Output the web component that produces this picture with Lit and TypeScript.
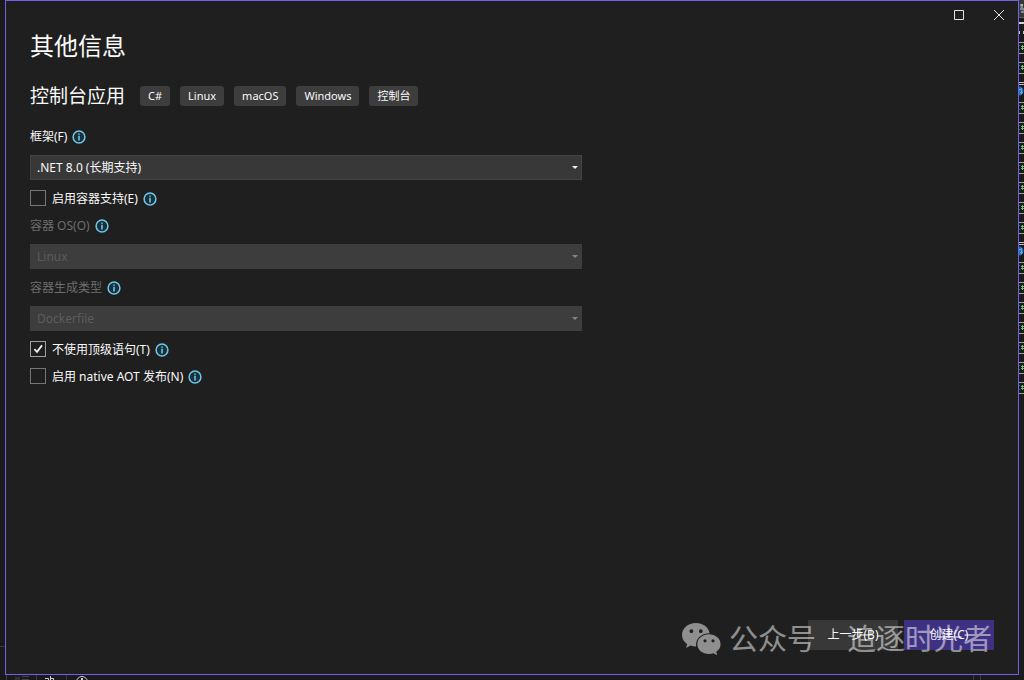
import { LitElement, html, css, svg } from "lit";
import { customElement, property } from "lit/decorators.js";

const infoIcon = html`
  <svg class="info" viewBox="0 0 14 14" role="img" aria-label="信息">
    <circle cx="7" cy="7" r="5.9" fill="#1c3038" stroke="#6cc8ec" stroke-width="1.5" />
    <path d="M6.2 3.4h1.6v1.4H6.2zM6.2 5.8h1.6v4.8H6.2z" fill="#6cc8ec" />
  </svg>
`;

const shared = css`
  * {
    box-sizing: border-box;
  }
  .info {
    width: 14px;
    height: 14px;
    flex: none;
    display: block;
  }
`;

@customElement("select-field")
class SelectField extends LitElement {
  @property() label = "";
  @property() value = "";
  @property({ type: Boolean }) disabled = false;

  static styles = [
    shared,
    css`
      :host {
        display: block;
        padding-bottom: 1px;
      }
      .caption {
        display: flex;
        align-items: center;
        gap: 5px;
        height: 18px;
        margin-bottom: 9px;
      }
      .box {
        display: grid;
        align-items: center;
      }
      .select {
        grid-area: 1 / 1;
        appearance: none;
        width: 100%;
        height: 25px;
        padding: 0 24px 0 6px;
        border: 1px solid #434343;
        border-radius: 0;
        background: #383838;
        color: #fafafa;
        font: inherit;
        opacity: 1;
      }
      .arrow {
        grid-area: 1 / 1;
        justify-self: end;
        width: 6px;
        height: 3px;
        margin-right: 4px;
        fill: #f0f0f0;
        pointer-events: none;
      }
      .off .label {
        color: #6d6d6d;
      }
      .off .select {
        background: #3d3d3d;
        border-color: #3d3d3d;
        color: #5c5c5c;
      }
      .off .arrow {
        fill: #858585;
      }
    `,
  ];

  render() {
    return html`
      <div class=${this.disabled ? "off" : "on"}>
        <div class="caption">
          <label class="label" for="field">${this.label}</label>${infoIcon}
        </div>
        <div class="box">
          <select class="select" id="field" ?disabled=${this.disabled}>
            <option>${this.value}</option>
          </select>
          <svg class="arrow" viewBox="0 0 6 3"><path d="M0 0h6L3 3z" /></svg>
        </div>
      </div>
    `;
  }
}

@customElement("check-field")
class CheckField extends LitElement {
  @property() label = "";
  @property({ type: Boolean }) checked = false;

  static styles = [
    shared,
    css`
      :host {
        display: flex;
        align-items: center;
        gap: 5px;
        height: 18px;
      }
      .label {
        display: flex;
        align-items: flex-start;
        gap: 6px;
      }
      .mark {
        display: grid;
      }
      .tick {
        grid-area: 1 / 1;
        appearance: none;
        width: 16px;
        height: 16px;
        margin: 0;
        border: 1px solid #767676;
        background: #1f1f1f;
      }
      .tick:checked {
        border-color: #a0a0a0;
      }
      .glyph {
        grid-area: 1 / 1;
        width: 16px;
        height: 16px;
        fill: none;
        stroke: #f0f0f0;
        stroke-width: 1.8;
        pointer-events: none;
      }
      .tick:not(:checked) + .glyph {
        display: none;
      }
    `,
  ];

  render() {
    return html`
      <label class="label">
        <span class="mark">
          <input class="tick" type="checkbox" .checked=${this.checked} />
          <svg class="glyph" viewBox="0 0 16 16"><path d="M4.400 8.200l2.600 2.600L12 4.400" /></svg>
        </span>
        ${this.label}
      </label>
      ${infoIcon}
    `;
  }
}

/* Kinds of nodes in the solution tree that shows beside the dialog. */
const treeRows = [
  "file", "file", "web", "file", "file", "file", "file", "file", "file", "file",
  "web", "file", "file", "file", "file", "file", "file", "file",
];

@customElement("app-root")
class AppRoot extends LitElement {
  static styles = [
    shared,
    css`
      :host {
        display: grid;
        grid-template-columns: 5px minmax(0, 1fr) 5px;
        grid-template-rows: minmax(0, 1fr) 5px;
        height: 100vh;
        overflow: hidden;
        background: #1a1a1a;
        color: #fafafa;
        font: 12px/18px "Noto Sans", "Noto Sans CJK SC", sans-serif;
      }
      .gutter {
        display: flex;
        flex-direction: column;
        justify-content: flex-end;
        padding-bottom: 28px;
      }
      .rule {
        height: 1px;
        background: #3d3d3d;
      }
      .dialog {
        display: flex;
        flex-direction: column;
        border: 1px solid #7160e8;
        background: #1f1f1f;
      }
      .titlebar {
        display: flex;
        justify-content: flex-end;
        height: 28px;
      }
      .winbtn {
        display: grid;
        place-items: center;
        width: 40px;
        height: 28px;
        padding: 0;
        border: 0;
        background: none;
      }
      .winicon {
        width: 12px;
        height: 12px;
        fill: none;
        stroke: #e6e6e6;
      }
      .content {
        flex: 1;
        padding: 0 24px;
      }
      .title {
        margin: 0;
        font-size: 24px;
        line-height: 34px;
        font-weight: 400;
      }
      .project {
        display: flex;
        align-items: center;
        gap: 15px;
        height: 28px;
        margin: 19px 0 18px;
      }
      .name {
        margin: 0;
        font-size: 19px;
        line-height: 28px;
        font-weight: 400;
      }
      .tags {
        display: flex;
        gap: 10px;
        margin: 0;
        padding: 0;
        list-style: none;
      }
      .tag {
        height: 20px;
        padding: 0 8px;
        border-radius: 3px;
        background: #3d3d3d;
        font-size: 11px;
        line-height: 20px;
      }
      .form {
        display: flex;
        flex-direction: column;
        gap: 9px;
        width: 100%;
        max-width: 552px;
      }
      .footer {
        display: grid;
        justify-items: end;
        align-items: start;
        padding: 0 24px 16px;
      }
      .actions {
        grid-area: 1 / 1;
        display: flex;
        gap: 6px;
      }
      .action {
        width: 90px;
        height: 30px;
        padding: 0;
        border: 0;
        background: #383838;
        color: #fafafa;
        font: inherit;
      }
      .primary {
        background: #3f3182;
      }
      .watermark {
        grid-area: 1 / 1;
        display: flex;
        align-items: center;
        gap: 8px;
        padding-right: 2px;
        color: #ffffff;
        opacity: 0.5;
        font-size: 29px;
        line-height: 38px;
        white-space: pre;
        pointer-events: none;
        z-index: 1;
      }
      .account {
        display: flex;
        gap: 31px;
      }
      .bubbles {
        width: 39px;
        height: 32px;
      }
      .leaf {
        display: block;
        width: 5px;
        height: 20px;
      }
      .top {
        height: 42px;
      }
      .status {
        grid-column: 1 / -1;
        display: flex;
      }
      .marks {
        width: 100px;
        height: 5px;
      }
      .end {
        width: 8px;
        height: 5px;
        margin-left: auto;
        margin-right: 43px;
        border: solid #3d3d3d;
        border-width: 0 1px;
      }
    `,
  ];

  leaf(kind: string) {
    return html`<svg class="leaf" viewBox="0 0 5 20">
      ${kind === "file"
        ? svg`<path d="M0 .5h5M0 11.5h5" stroke="#a0a0a0" />
            <path d="M2 4.5h3M2 6.5h3M3.5 3v5" stroke="#6cc56c" />
            <path d="M.5 3v1M.5 7v1" stroke="#3f6f3f" />`
        : svg`<path d="M0 .5h5M0 2.5h5" stroke="#c0c0c0" />
            <circle cx="0" cy="9" r="4.5" fill="#2472b8" />
            <path d="M0 7.5h3M1 10.5h3M2.5 6v6" stroke="#59a8e8" />`}
    </svg>`;
  }

  render() {
    return html`
      <div class="gutter"><div class="rule"></div></div>
      <main class="dialog">
        <div class="titlebar">
          <button class="winbtn" aria-label="最大化">
            <svg class="winicon" viewBox="0 0 12 12"><path d="M2.5 1.5h9v9h-9z" /></svg>
          </button>
          <button class="winbtn" aria-label="关闭">
            <svg class="winicon" viewBox="0 0 12 12"><path d="M2 1l10 10M12 1L2 11" /></svg>
          </button>
        </div>
        <div class="content">
          <h1 class="title">其他信息</h1>
          <div class="project">
            <h2 class="name">控制台应用</h2>
            <ul class="tags">
              ${["C#", "Linux", "macOS", "Windows", "控制台"].map(
                (t) => html`<li class="tag">${t}</li>`
              )}
            </ul>
          </div>
          <form class="form">
            <select-field label="框架(F)" value=".NET 8.0 (长期支持)"></select-field>
            <check-field label="启用容器支持(E)"></check-field>
            <select-field label="容器 OS(O)" value="Linux" disabled></select-field>
            <select-field label="容器生成类型" value="Dockerfile" disabled></select-field>
            <check-field label="不使用顶级语句(T)" checked></check-field>
            <check-field label="启用 native AOT 发布(N)"></check-field>
          </form>
        </div>
        <footer class="footer">
          <div class="actions">
            <button class="action">上一步(B)</button>
            <button class="action primary">创建(C)</button>
          </div>
          <div class="watermark">
            <svg class="bubbles" viewBox="0 0 39 32" fill="#fff">
              <path
                fill-rule="evenodd"
                d="M14 0C6 0 0 5.200 0 12c0 3.800 2 7 5.200 9.200L4 25l4.600-2.400c1.800.6 3.500.9 5.500.9C13.200 16 19 10.200 27.600 10.200 26.500 4.200 21 0 14 0zM9.400 6.300a1.900 1.900 0 1 1 0 3.800 1.900 1.900 0 0 1 0-3.800zM18.800 6.300a1.900 1.900 0 1 1 0 3.800 1.900 1.900 0 0 1 0-3.800z"
              />
              <path
                fill-rule="evenodd"
                d="M27 11.300c-6.600 0-11.700 4.400-11.700 9.900s5.100 9.700 11.700 9.700c1.500 0 3-.3 4.300-.7l3.900 2-1-3.400c2.800-1.800 4.400-4.600 4.400-7.600 0-5.500-5-9.900-11.600-9.900zM23 16.200a1.600 1.600 0 1 1 0 3.200 1.600 1.600 0 0 1 0-3.200zM31 16.200a1.600 1.600 0 1 1 0 3.200 1.600 1.600 0 0 1 0-3.200z"
              />
            </svg>
            <span class="account"><span>公众号</span><span>追逐时光者</span></span>
          </div>
        </footer>
      </main>
      <div class="tree">
        <svg class="leaf top" viewBox="0 0 5 42">
          <path d="M0 0h5v17H0z" fill="#383838" />
          <path d="M1 5h3M3 4v4M1 9h4M2 12h3" stroke="#d8d8d8" />
          <path d="M1 7h2M3 11h2" stroke="#4f90d0" />
          <path d="M0 17.5h5" stroke="#5a5a5a" />
          <path d="M0 23h5" stroke="#d0d0d0" stroke-width="2" />
          <path d="M.5 31v3M4.5 31v3" stroke="#c0c0c0" />
        </svg>
        ${treeRows.map((k) => this.leaf(k))}
      </div>
      <div class="status">
        <svg class="marks" viewBox="0 0 100 5">
          <path d="M6.5 0v5M36.5 0v5M66.5 0v5" stroke="#3d3d3d" />
          <path d="M15 2l5 3M20 2l-5 3M22 1.5h7M22 4.5h7" stroke="#444" fill="none" />
          <path d="M45 3.5h3.500v2M50.500 1v4M50 3.500h3.500v2" stroke="#d0d0d0" fill="none" />
          <circle cx="82" cy="7" r="5.5" stroke="#d0d0d0" fill="none" />
          <path d="M81 3h2v2h-2z" fill="#d0d0d0" />
        </svg>
        <div class="end"></div>
      </div>
    `;
  }
}
